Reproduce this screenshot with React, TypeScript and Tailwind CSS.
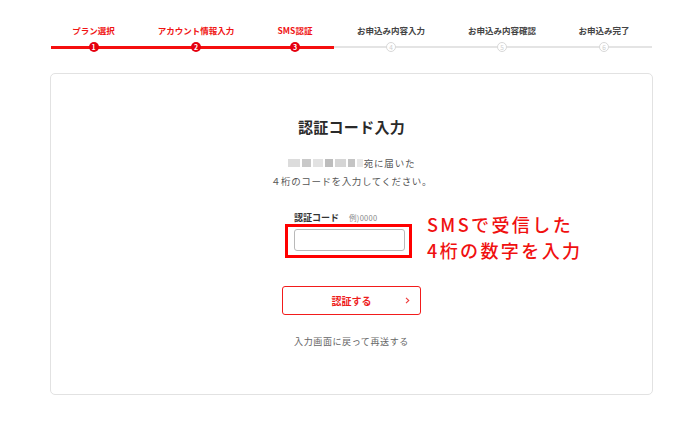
import React from "react";

const font = { fontFamily: '"Noto Sans CJK JP", "Noto Sans", sans-serif' };

type Step = { label: string; w: string; n: number; done: boolean };

const steps: Step[] = [
  { label: "プラン選択", w: "w-[85px]", n: 1, done: true },
  { label: "アカウント情報入力", w: "w-[120px]", n: 2, done: true },
  { label: "SMS認証", w: "w-[78px]", n: 3, done: true },
  { label: "お申込み内容入力", w: "w-[114px]", n: 4, done: false },
  { label: "お申込み内容確認", w: "w-[108px]", n: 5, done: false },
  { label: "お申込み完了", w: "w-[96px]", n: 6, done: false },
];

function StepItem({ s }: { s: Step }) {
  return (
    <div className={`${s.w} flex flex-col items-center`}>
      <div
        className={`h-[14px] text-[8.5px] font-bold leading-[14px] whitespace-nowrap ${
          s.done ? "text-[#f01414]" : "text-[#444]"
        }`}
      >
        {s.label}
      </div>
      <div className="relative mt-[5px] h-[10px] w-full">
        <div
          className={`absolute left-0 right-0 ${
            s.done ? "top-[3.5px] h-[3px] bg-[#f50f0f]" : "top-[4px] h-[2px] bg-[#e4e4e4]"
          }`}
        />
        <div className="relative mx-auto flex h-[10px] w-[10px] items-center justify-center">
          {s.done ? (
            <div className="flex h-[10px] w-[10px] items-center justify-center rounded-full bg-[#e5000f] text-[7px] font-bold leading-none text-white">
              {s.n}
            </div>
          ) : (
            <div className="flex h-[10px] w-[10px] items-center justify-center rounded-full border border-[#d8d8d8] bg-white text-[6.5px] leading-none text-[#cfcfcf]">
              {s.n}
            </div>
          )}
        </div>
      </div>
    </div>
  );
}

export default function App() {
  return (
    <div className="h-[421px] w-[700px] bg-white" style={font}>
      <div className="flex pl-[51px] pt-[23px]">
        {steps.map((s) => (
          <StepItem key={s.n} s={s} />
        ))}
      </div>

      <div className="ml-[50px] mt-[21px] flex h-[322px] w-[603px] flex-col items-center rounded-[5px] border-[1.5px] border-[#e2e2e2]">
        <div className="mt-[43px] text-[15px] font-bold leading-[20px] tracking-[0.3px] text-[#2a2a2a]">
          認証コード入力
        </div>

        <div className="mt-[17px] flex items-center text-[9.5px] leading-[18px] tracking-[0.8px] text-[#555]">
          <div className="mr-[1px] flex h-[8px] items-center gap-[2px]">
            <div className="h-[8px] w-[12px] bg-[#dcdcdc]" />
            <div className="h-[8px] w-[9px] bg-[#c9c9c9]" />
            <div className="h-[8px] w-[10px] bg-[#e2e2e2]" />
            <div className="h-[8px] w-[8px] bg-[#bdbdbd]" />
            <div className="h-[8px] w-[11px] bg-[#d5d5d5]" />
            <div className="h-[8px] w-[7px] bg-[#c4c4c4]" />
            <div className="h-[8px] w-[6px] bg-[#e8e8e8]" />
          </div>
          <span>宛に届いた</span>
        </div>
        <div className="text-[9.5px] leading-[18px] tracking-[0.6px] text-[#555]">
          ４桁のコードを入力してください。
        </div>

        <div className="mt-[21px] flex w-full items-start pl-[234px]">
          <div className="flex flex-col">
            <div className="flex items-baseline pl-[9px]">
              <span className="text-[9px] font-bold leading-[14px] text-[#333]">認証コード</span>
              <span className="ml-[10px] text-[7.5px] leading-[14px] tracking-[0.3px] text-[#888]">例)0000</span>
            </div>
            <div className="mt-[-1px] h-[34px] w-[127px] border-[3px] border-[#f00] px-[6px] py-[2px]">
              <div className="h-[22px] w-[111px] rounded-[3px] border border-[#b9b9b9] bg-white" />
            </div>
          </div>
          <div className="ml-[15px] mt-[0px] flex flex-col text-[18px] font-medium leading-[26px] tracking-[2.4px] text-[#f01010]">
            <div>SMSで受信した</div>
            <div>4桁の数字を入力</div>
          </div>
        </div>

        <div className="relative mt-[23px] flex h-[29px] w-[139px] items-center justify-center rounded-[3px] border-[1.5px] border-[#f21b1b]">
          <span className="text-[10px] font-bold text-[#ee1c1c]">認証する</span>
          <svg
            className="absolute right-[10px] top-[10px]"
            width="5"
            height="7"
            viewBox="0 0 5 7"
            fill="none"
          >
            <path d="M1 0.8 L3.8 3.5 L1 6.2" stroke="#ee3a3a" strokeWidth="1.1" />
          </svg>
        </div>

        <div className="mt-[20px] text-[9px] tracking-[0.6px] text-[#666]">入力画面に戻って再送する</div>
      </div>
    </div>
  );
}
